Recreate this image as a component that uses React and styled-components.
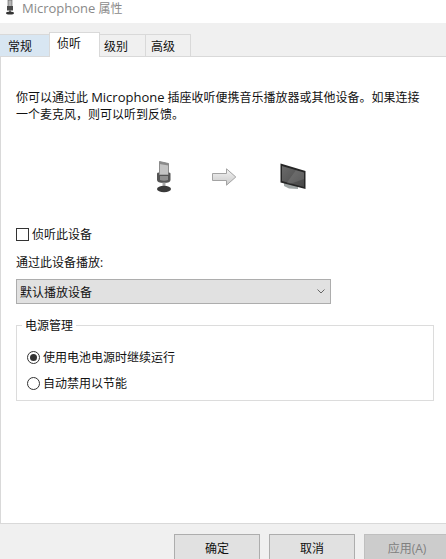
import React from 'react'
import styled, { createGlobalStyle } from 'styled-components'

const FONT = '"Open Sans", "Noto Sans CJK SC", sans-serif'

const GlobalStyle = createGlobalStyle`
    html, body { margin: 0; padding: 0; background: #ffffff; }
    body { width: 446px; height: 559px; overflow: hidden; font-family: ${ FONT }; font-size: 12px; color: #111111; }
`

const Dialog = styled.div`
    width: 446px;
    height: 559px;
    display: flex;
    flex-direction: column;
    overflow: hidden;
`

const TitleBar = styled.div`
    height: 23px;
    flex: none;
    display: flex;
    align-items: flex-start;
    gap: 6px;
    padding: 0 0 0 5px;
    color: #8a8a8a;
    line-height: 17px;
    background: #ffffff;
`

const LatinWord = styled.span`
    font-size: 13px;
`

const TabStrip = styled.div`
    height: 34px;
    flex: none;
    box-sizing: border-box;
    display: flex;
    align-items: flex-end;
    background: #f0f0f0;
    border-bottom: 1px solid #d9d9d9;
`

const Tab = styled.div`
    box-sizing: border-box;
    width: ${ props => props.width }px;
    height: ${ props => props.active ? 25 : 22 }px;
    margin-bottom: ${ props => props.active ? -1 : 0 }px;
    padding-top: ${ props => props.active ? 3 : 4 }px;
    padding-left: ${ props => props.pad }px;
    line-height: 16px;
    background: ${ props => props.active ? '#ffffff' : props.hovered ? '#d8e6f2' : '#f0f0f0' };
    border-top: 1px solid #d9d9d9;
    border-left: ${ props => props.active ? '1px solid #d9d9d9' : 0 };
    border-right: ${ props => props.hovered ? 0 : '1px solid #d9d9d9' };
`

const Panel = styled.div`
    flex: 1;
    min-height: 0;
    display: flex;
    flex-direction: column;
    padding: 32px 0 0 15px;
    background: #ffffff;
    border-left: 1px solid #d9d9d9;
`

const Description = styled.p`
    margin: 0;
    width: 410px;
    line-height: 17px;
`

const Diagram = styled.div`
    display: flex;
    align-items: center;
    margin: 36px 0 0 138px;
    height: 35px;
`

const DiagramGap = styled.div`
    width: ${ props => props.width }px;
    flex: none;
`

const CheckRow = styled.label`
    display: flex;
    align-items: center;
    gap: 3px;
    margin-top: 32px;
    height: 16px;
`

const CheckBox = styled.span`
    box-sizing: border-box;
    width: 13px;
    height: 13px;
    border: 1px solid #333333;
    background: #ffffff;
`

const FieldLabel = styled.div`
    margin-top: 12px;
    line-height: 17px;
`

const Select = styled.div`
    box-sizing: border-box;
    width: 315px;
    height: 25px;
    margin-top: 8px;
    padding: 0 5px 0 3px;
    display: flex;
    align-items: center;
    justify-content: space-between;
    background: #e1e1e1;
    border: 1px solid #adadad;
`

const GroupBox = styled.fieldset`
    box-sizing: border-box;
    width: 418px;
    height: 84px;
    margin: 13px 0 0 0;
    padding: 15px 0 0 10px;
    border: 1px solid #dcdcdc;
    border-radius: 0;
    min-inline-size: 0;
    display: flex;
    flex-direction: column;
    gap: 10px;
`

const GroupTitle = styled.legend`
    margin-left: -5px;
    padding: 0 3px;
    line-height: 17px;
`

const RadioRow = styled.label`
    display: flex;
    align-items: center;
    gap: 3px;
    height: 16px;
`

const RadioMark = styled.span`
    box-sizing: border-box;
    width: 13px;
    height: 13px;
    border-radius: 50%;
    border: 1px solid #333333;
    background: #ffffff;
    display: flex;
    align-items: center;
    justify-content: center;
    &::after {
        content: '';
        width: 7px;
        height: 7px;
        border-radius: 50%;
        background: ${ props => props.checked ? '#333333' : 'transparent' };
    }
`

const Footer = styled.div`
    box-sizing: border-box;
    height: 36px;
    flex: none;
    display: flex;
    gap: 9px;
    padding: 10px 0 0 174px;
    background: #f0f0f0;
    border-top: 1px solid #d9d9d9;
`

const Button = styled.div`
    box-sizing: border-box;
    flex: none;
    width: 86px;
    height: 30px;
    padding-top: 6px;
    text-align: center;
    line-height: 16px;
    background: ${ props => props.disabled ? '#cccccc' : '#e1e1e1' };
    color: ${ props => props.disabled ? '#808080' : '#111111' };
    border: 1px solid ${ props => props.disabled ? '#bfbfbf' : '#adadad' };
`

const TitleIcon = () => (
    <svg width="11" height="15" viewBox="0 0 11 15">
        <path d="M3 0h4l0 7H3z" fill="#b5b5b5" stroke="#555" strokeWidth="0.6" />
        <path d="M2 6h6v4.5H2z" fill="#4a4a4a" />
        <path d="M4 10h2v2H4z" fill="#777" />
        <ellipse cx="5" cy="13" rx="4" ry="1.6" fill="#333" />
    </svg>
)

const MicIcon = () => (
    <svg width="20" height="32" viewBox="0 0 20 32">
        <path d="M5.5 0.5L14.5 2.5L14.5 14H5.5Z" fill="#c4c4c4" stroke="#777" strokeWidth="0.8" />
        <path d="M5.5 0.5L14.5 2.5L14.5 4.5L5.5 3Z" fill="#8a8a8a" />
        <path d="M3 12.5Q3 11.5 5 11.5V14H14.5V11.5Q16.5 11.5 16.5 12.5V19Q16.5 22 10 22Q3 22 3 19Z" fill="#555" />
        <path d="M6 15H14V19Q10 20.5 6 19Z" fill="#8f8f8f" />
        <path d="M8.5 21.5H11.5V27H8.5Z" fill="#a8a8a8" />
        <ellipse cx="10" cy="28" rx="7" ry="3.2" fill="#3a3a3a" />
    </svg>
)

const ArrowIcon = () => (
    <svg width="25" height="19" viewBox="0 -1 25 19">
        <defs>
            <linearGradient id="arrowFill" x1="0" y1="0" x2="0" y2="1">
                <stop offset="0" stopColor="#f4f4f4" />
                <stop offset="1" stopColor="#c9c9c9" />
            </linearGradient>
        </defs>
        <path d="M0.5 5.5H14.5V0.8L23.8 9L14.5 17.2V12.5H0.5Z" fill="url(#arrowFill)" stroke="#a3a3a3" strokeWidth="1" strokeLinejoin="round" />
    </svg>
)

const MonitorIcon = () => (
    <svg width="26" height="27" viewBox="0 0 26 27">
        <defs>
            <linearGradient id="screenFill" x1="0" y1="0" x2="1" y2="1">
                <stop offset="0" stopColor="#6a6a6a" />
                <stop offset="1" stopColor="#474747" />
            </linearGradient>
        </defs>
        <path d="M4 19L18 23V26L9 25.5L4 23Z" fill="#9fa5a5" />
        <path d="M0.5 0.5L25.5 8V26L0.5 19.5Z" fill="#262626" />
        <path d="M2 3L24 9.5V24L2 18Z" fill="url(#screenFill)" />
        <path d="M16 7.2L24 9.5V16L10 21L6.5 20Z" fill="#ffffff" fillOpacity="0.1" />
    </svg>
)

const ChevronIcon = () => (
    <svg width="8" height="5" viewBox="0 0 8 5">
        <path d="M0.5 0.5L4 4L7.5 0.5" fill="none" stroke="#666" strokeWidth="1" />
    </svg>
)

const App = () => (
    <Dialog>
        <GlobalStyle />
        <TitleBar>
            <TitleIcon />
            <span><LatinWord>Microphone</LatinWord> 属性</span>
        </TitleBar>
        <TabStrip>
            <Tab width={ 49 } pad={ 8 } hovered>常规</Tab>
            <Tab width={ 51 } pad={ 7 } active>侦听</Tab>
            <Tab width={ 46 } pad={ 4 }>级别</Tab>
            <Tab width={ 45 } pad={ 5 }>高级</Tab>
        </TabStrip>
        <Panel>
            <Description>你可以通过此 <LatinWord>Microphone</LatinWord> 插座收听便携音乐播放器或其他设备。如果连接一个麦克风，则可以听到反馈。</Description>
            <Diagram>
                <MicIcon />
                <DiagramGap width={ 38 } />
                <ArrowIcon />
                <DiagramGap width={ 43 } />
                <MonitorIcon />
            </Diagram>
            <CheckRow><CheckBox />侦听此设备</CheckRow>
            <FieldLabel>通过此设备播放:</FieldLabel>
            <Select>
                <span>默认播放设备</span>
                <ChevronIcon />
            </Select>
            <GroupBox>
                <GroupTitle>电源管理</GroupTitle>
                <RadioRow><RadioMark checked />使用电池电源时继续运行</RadioRow>
                <RadioRow><RadioMark />自动禁用以节能</RadioRow>
            </GroupBox>
        </Panel>
        <Footer>
            <Button>确定</Button>
            <Button>取消</Button>
            <Button disabled>应用(A)</Button>
        </Footer>
    </Dialog>
)

export default App
